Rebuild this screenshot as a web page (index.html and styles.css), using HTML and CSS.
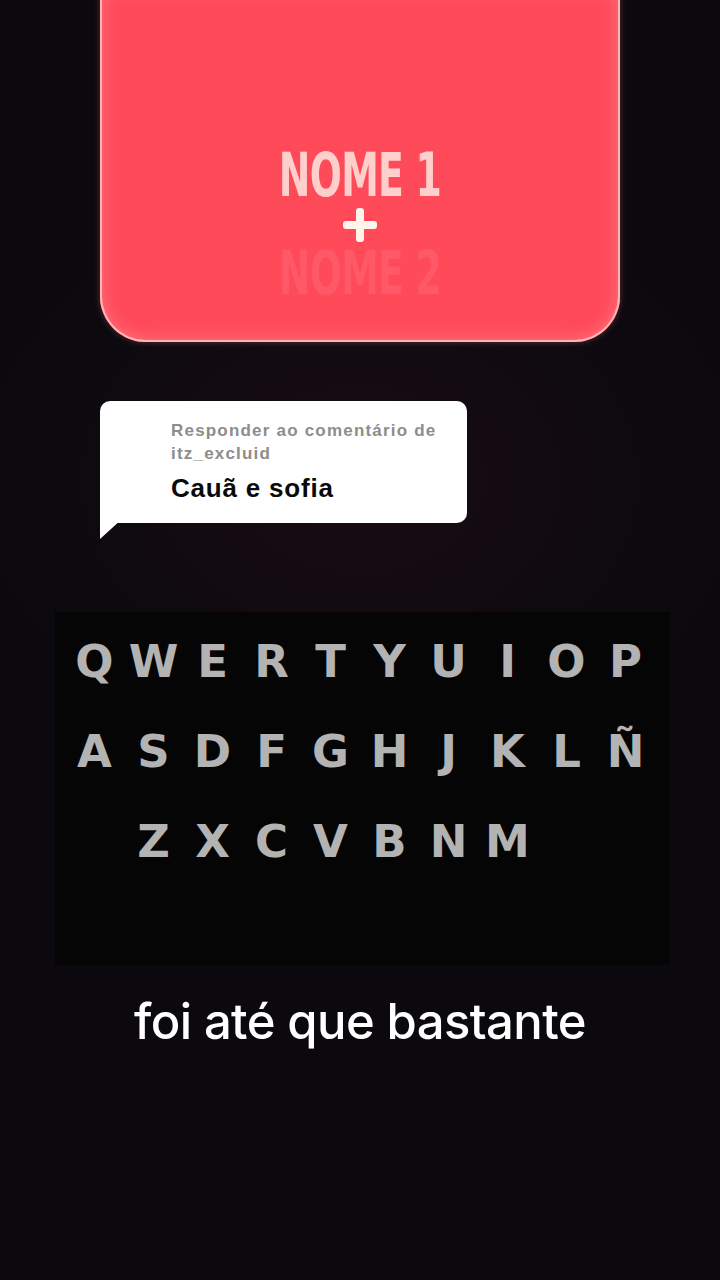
FILE: index.html
```html
<!DOCTYPE html>
<html lang="pt">
<head>
<meta charset="utf-8">
<link rel="stylesheet" href="styles.css">
</head>
<body>
<div class="screen">
  <div class="card">
    <div class="name n1">NOME 1</div>
    <div class="plus"></div>
    <div class="name n2">NOME 2</div>
  </div>

  <div class="bubble">
    <div class="reply">Responder ao comentário de<br>itz_excluid</div>
    <div class="comment">Cauã e sofia</div>
    <div class="tail"></div>
  </div>

  <div class="keyboard">
    <span>Q</span><span>W</span><span>E</span><span>R</span><span>T</span><span>Y</span><span>U</span><span>I</span><span>O</span><span>P</span>
    <span>A</span><span>S</span><span>D</span><span>F</span><span>G</span><span>H</span><span>J</span><span>K</span><span>L</span><span>Ñ</span>
    <span class="first3">Z</span><span>X</span><span>C</span><span>V</span><span>B</span><span>N</span><span>M</span>
  </div>

  <div class="caption">foi até que bastante</div>
</div>
</body>
</html>
```

FILE: styles.css
```css
html, body {
  margin: 0;
  padding: 0;
}
body {
  background: #0c090e;
  width: 720px;
  height: 1280px;
  overflow: hidden;
}
.screen {
  width: 720px;
  height: 1280px;
  background: radial-gradient(ellipse 420px 320px at 360px 480px, #1a0c14 0%, #0d0a0f 70%, #0b090d 100%);
  display: flex;
  flex-direction: column;
  font-family: "Liberation Sans", Arial, sans-serif;
}
.card {
  margin-top: -12px;
  margin-left: 100px;
  width: 520px;
  height: 354px;
  box-sizing: border-box;
  background: #ff4a5a;
  border-radius: 0 0 46px 46px;
  box-shadow: inset 0 0 0 2px #ffb3b5, inset 0 0 14px 4px #ff6e7a, 0 0 6px rgba(255, 120, 130, 0.35);
  display: flex;
  flex-direction: column;
  align-items: center;
  padding-top: 154px;
}
.name {
  font-family: "DejaVu Sans Condensed", "DejaVu Sans", sans-serif;
  font-weight: 700;
  font-size: 60px;
  line-height: 66px;
  letter-spacing: -1px;
  transform: scaleX(0.7);
}
.n1 {
  color: #ffcfcb;
}
.n2 {
  color: #ff5866;
  margin-top: 6px;
}
.plus {
  width: 34px;
  height: 34px;
  position: relative;
  margin-bottom: -8px;
}
.plus::before, .plus::after {
  content: "";
  position: absolute;
  background: #fff4ec;
  border-radius: 3px;
}
.plus::before {
  left: 0; right: 0; top: 13px; height: 8px;
}
.plus::after {
  top: 0; bottom: 0; left: 13px; width: 8px;
}
.bubble {
  margin-top: 59px;
  margin-left: 100px;
  width: 367px;
  height: 122px;
  box-sizing: border-box;
  background: #ffffff;
  border-radius: 10px 10px 10px 0;
  padding: 18px 0 0 71px;
  position: relative;
}
.tail {
  position: absolute;
  left: 0;
  top: 118px;
  width: 22px;
  height: 20px;
  background: #ffffff;
  clip-path: polygon(0 0, 100% 0, 0 100%);
}
.reply {
  color: #8d8d8d;
  font-family: "Liberation Sans", Arial, sans-serif;
  font-weight: 700;
  font-size: 17px;
  line-height: 23px;
  letter-spacing: 1.2px;
}
.comment {
  color: #0a0a0a;
  font-family: "Liberation Sans", Arial, sans-serif;
  font-weight: 700;
  font-size: 26px;
  line-height: 30px;
  margin-top: 8px;
  letter-spacing: 0.8px;
}
.keyboard {
  margin-top: 89px;
  margin-left: 55px;
  width: 615px;
  height: 353px;
  box-sizing: border-box;
  background: #060506;
  display: grid;
  grid-template-columns: repeat(10, 59px);
  grid-auto-rows: 90px;
  padding: 17px 0 0 10px;
}
.keyboard span {
  text-align: center;
  color: #b3b3b3;
  font-family: "DejaVu Sans", "Liberation Sans", sans-serif;
  font-weight: 700;
  font-size: 45px;
  line-height: 66px;
}
.keyboard .first3 {
  grid-column-start: 2;
}
.caption {
  margin-top: 26px;
  text-align: center;
  color: #ffffff;
  font-family: "Inter", "Roboto", sans-serif;
  font-weight: 500;
  font-size: 49px;
  line-height: 62px;
  letter-spacing: -0.6px;
}
```
